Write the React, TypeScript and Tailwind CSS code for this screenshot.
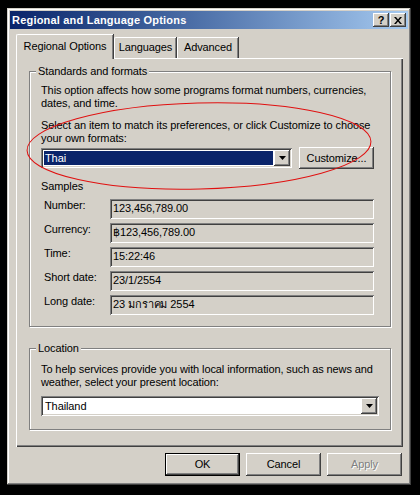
import React from "react";

const FONT = { fontFamily: '"Liberation Sans", Arial, "DejaVu Sans", sans-serif' };

function Raised({ className = "", children }: { className?: string; children?: React.ReactNode }) {
  return (
    <div
      className={
        "bg-[#d4d0c8] shadow-[inset_-1px_-1px_0_#404040,inset_1px_1px_0_#ffffff,inset_-2px_-2px_0_#808080,inset_2px_2px_0_#d4d0c8] " +
        className
      }
    >
      {children}
    </div>
  );
}

const SUNKEN =
  "shadow-[inset_1px_1px_0_#808080,inset_-1px_-1px_0_#ffffff,inset_2px_2px_0_#404040,inset_-2px_-2px_0_#d4d0c8]";

function Arrow() {
  return (
    <svg width="7" height="4" viewBox="0 0 7 4">
      <path d="M0 0h7L3.5 4z" fill="#000" />
    </svg>
  );
}

function Combo({ value, selected, width }: { value: string; selected?: boolean; width: string }) {
  return (
    <div className={"h-[20px] bg-white p-[2px] flex " + SUNKEN + " " + width}>
      <div className="flex-1 p-[1px] flex">
        <div
          className={
            "flex-1 flex items-center pl-[1px] text-[11px] leading-[13px] " +
            (selected ? "bg-[#0a246a] text-white" : "text-black")
          }
        >
          {value}
        </div>
      </div>
      <Raised className="w-[16px] h-[16px] flex items-center justify-center">
        <Arrow />
      </Raised>
    </div>
  );
}

function GroupBox({
  label,
  className = "",
  children,
}: {
  label: string;
  className?: string;
  children?: React.ReactNode;
}) {
  return (
    <div
      className={
        "relative border border-[#808080] shadow-[inset_1px_1px_0_#ffffff,1px_1px_0_#ffffff] " + className
      }
    >
      <div className="absolute left-[6px] top-[-7px] bg-[#d4d0c8] px-[2px] text-[11px] leading-[13px] text-black">
        {label}
      </div>
      {children}
    </div>
  );
}

function SampleRow({ label, value }: { label: string; value: string }) {
  return (
    <div className="flex items-start h-[20px]">
      <div className="w-[69px] pl-[3px] text-[11px] leading-[13px]">{label}</div>
      <div
        className={
          "w-[264px] h-[20px] bg-[#d4d0c8] pl-[3px] pt-[3px] text-[11px] leading-[13px] " + SUNKEN
        }
      >
        {value}
      </div>
    </div>
  );
}

function Button({
  label,
  isDefault,
  disabled,
}: {
  label: string;
  isDefault?: boolean;
  disabled?: boolean;
}) {
  const inner = (
    <Raised className="w-full h-full flex items-center justify-center">
      <span
        className={
          "text-[11px] leading-[13px] " +
          (disabled ? "text-[#808080] [text-shadow:1px_1px_0_#ffffff]" : "text-black")
        }
      >
        {label}
      </span>
    </Raised>
  );
  if (isDefault) {
    return <div className="w-[75px] h-[23px] border border-black">{inner}</div>;
  }
  return <div className="w-[75px] h-[23px]">{inner}</div>;
}

export default function App() {
  return (
    <div className="relative w-[420px] h-[495px] bg-black pt-[8px] pl-[7px] tracking-[-0.1px]" style={FONT}>
      <div className="w-[404px] h-[477px] bg-[#d4d0c8] p-[3px] shadow-[inset_-1px_-1px_0_#404040,inset_1px_1px_0_#d4d0c8,inset_-2px_-2px_0_#808080,inset_2px_2px_0_#ffffff]">
        {/* Title bar */}
        <div className="h-[18px] flex items-center bg-gradient-to-r from-[#0a246a] to-[#a6caf0] pl-[2px] pr-[2px]">
          <div className="flex-1 text-white font-bold text-[11px] leading-[13px] tracking-[0.2px]">
            Regional and Language Options
          </div>
          <div className="flex">
            <Raised className="w-[16px] h-[14px] flex items-center justify-center">
              <span className="text-[11px] leading-[11px] font-bold text-black mt-[1px]">?</span>
            </Raised>
            <Raised className="w-[16px] h-[14px] ml-[1px] flex items-center justify-center">
              <svg width="8" height="7" viewBox="0 0 8 7">
                <path d="M0 0h2l2 2.5L6 0h2L5 3.5 8 7H6L4 4.5 2 7H0l3-3.5z" fill="#000" />
              </svg>
            </Raised>
          </div>
        </div>

        {/* Body */}
        <div className="pl-[6px] pt-[5px]">
          {/* Tabs */}
          <div className="flex items-end h-[24px] relative z-10">
            <div className="w-[97px] h-[25px] -mb-px bg-[#d4d0c8] border-l border-t border-white rounded-tl-[2px] shadow-[inset_-1px_0_0_#808080,1px_0_0_#404040] flex items-start justify-center pt-[5px] text-[11px] leading-[13px]">
              Regional Options
            </div>
            <div className="w-[62px] h-[21px] ml-[1px] bg-[#d4d0c8] border-l border-t border-white rounded-tl-[2px] shadow-[inset_-1px_0_0_#808080,1px_0_0_#404040] flex items-start justify-center pt-[3px] text-[11px] leading-[13px]">
              Languages
            </div>
            <div className="w-[61px] h-[21px] ml-[1px] bg-[#d4d0c8] border-l border-t border-white rounded-tl-[2px] shadow-[inset_-1px_0_0_#808080,1px_0_0_#404040] flex items-start justify-center pt-[3px] text-[11px] leading-[13px]">
              Advanced
            </div>
          </div>

          {/* Panel */}
          <div className="w-[387px] h-[389px] border-l border-t border-white shadow-[inset_-1px_-1px_0_#404040,inset_-2px_-2px_0_#808080] pl-[12px] pt-[12px]">
            <GroupBox label="Standards and formats" className="w-[362px] h-[256px]">
              <div className="pl-[11px] pt-[12px] text-[11px] leading-[13px]">
                <div>This option affects how some programs format numbers, currencies,</div>
                <div>dates, and time.</div>
                <div className="mt-[9px]">Select an item to match its preferences, or click Customize to choose</div>
                <div>your own formats:</div>
                <div className="flex items-start mt-[2px]">
                  <div className="mt-[1px]">
                    <Combo value="Thai" selected width="w-[251px]" />
                  </div>
                  <div className="ml-[7px] w-[75px] h-[22px]">
                    <Raised className="w-full h-full flex items-center justify-center">
                      <span className="text-[11px] leading-[13px]">Customize...</span>
                    </Raised>
                  </div>
                </div>
                <div className="mt-[11px]">Samples</div>
                <div className="mt-[6px] flex flex-col gap-[4px]">
                  <SampleRow label="Number:" value="123,456,789.00" />
                  <SampleRow label="Currency:" value="฿123,456,789.00" />
                  <SampleRow label="Time:" value="15:22:46" />
                  <SampleRow label="Short date:" value="23/1/2554" />
                  <SampleRow label="Long date:" value="23 มกราคม 2554" />
                </div>
              </div>
            </GroupBox>

            <GroupBox label="Location" className="w-[362px] h-[82px] mt-[21px]">
              <div className="pl-[11px] pt-[14px] text-[11px] leading-[13px]">
                <div>To help services provide you with local information, such as news and</div>
                <div>weather, select your present location:</div>
                <div className="mt-[7px]">
                  <Combo value="Thailand" width="w-[338px]" />
                </div>
              </div>
            </GroupBox>
          </div>

          {/* Buttons */}
          <div className="flex justify-end gap-[6px] mt-[6px] pr-[6px]">
            <Button label="OK" isDefault />
            <Button label="Cancel" />
            <Button label="Apply" disabled />
          </div>
        </div>
      </div>

      {/* Red annotation ellipse */}
      <svg
        className="absolute left-0 top-0 pointer-events-none"
        width="420"
        height="495"
        viewBox="0 0 420 495"
      >
        <ellipse
          cx="199"
          cy="146"
          rx="172"
          ry="43"
          transform="rotate(-1.5 199 146)"
          fill="none"
          stroke="#e01010"
          strokeWidth="1"
        />
      </svg>
    </div>
  );
}
